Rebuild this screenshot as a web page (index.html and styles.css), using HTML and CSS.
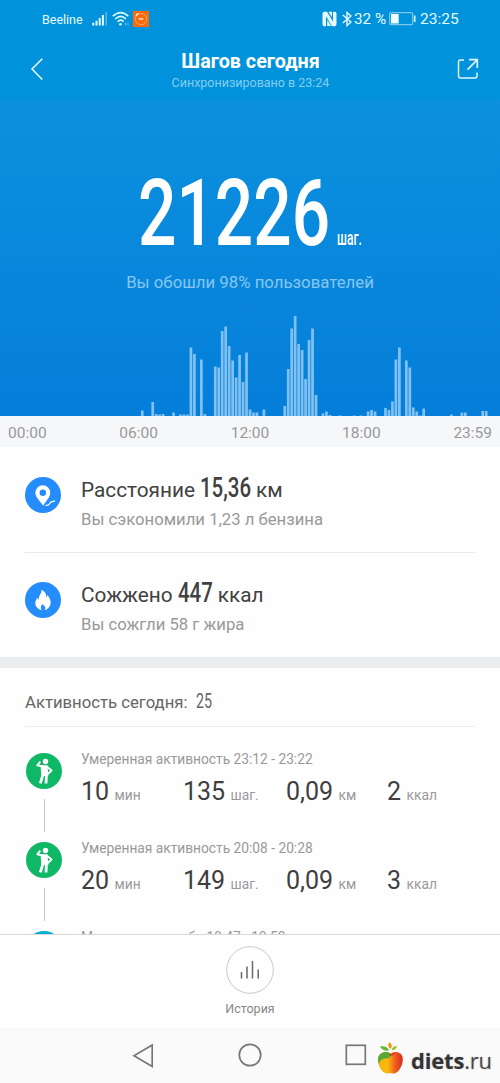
FILE: index.html
```html
<!DOCTYPE html>
<html lang="ru">
<head>
<meta charset="utf-8">
<title>Шагов сегодня</title>
<link rel="stylesheet" href="styles.css">
</head>
<body>
<div class="screen">
  <header class="top">
    <div class="status">
      <span class="carrier">Beeline</span>
      <svg class="signal" width="16" height="16" viewBox="0 0 16 16"><path d="M1.300 14.500v-2.800M4.500 14.500V9.700M7.700 14.500V7M10.900 14.500V4" stroke="#e4fbff" stroke-width="2"/><path d="M14.200 14.500V1" stroke="#5fb9e8" stroke-width="1.500"/></svg>
      <svg class="wifi" width="18" height="16" viewBox="0 0 18 16" fill="none" stroke="#dff8ff" stroke-width="1.700"><path d="M.8 5.200Q9-2 16.200 5.200M3.200 8Q9 2.600 13.800 8M5.600 10.600Q9 7.600 11.600 10.600"/><circle cx="8.500" cy="13.200" r="1.300" fill="#dff8ff" stroke="none"/><path d="M13.500 11.500v3M16 11.500v3" stroke="#6bc3ec" stroke-width="1"/></svg>
      <svg class="app" width="16" height="16" viewBox="0 0 16 16"><path d="M0 0h16v16H0z" fill="#fa6a0c"/><circle cx="8" cy="8" r="5.700" fill="none" stroke="#ffb07c" stroke-width=".8"/><path d="M3 4.800Q4 3.300 5.300 2.700" stroke="#fff" stroke-width="1.400" fill="none"/><path d="M5.700 8h4.600" stroke="#ffd9bd" stroke-width="1.700"/></svg>
      <span class="spacer"></span>
      <svg class="nfc" width="15" height="16" viewBox="0 0 15 16"><path d="M2.300.7Q.5.700.5 2.600V13.200Q.5 15.200 2.300 15.200H4V5.200l6 10h2.700q1.800 0 1.800-2V2.600q0-1.900-1.800-1.900H11V10.500L5 .7z" fill="#e8faff"/><path d="M5.200 15V8.800L9 15zM10 .8v5.500L6.500.8z" fill="#e8faff"/></svg>
      <svg class="bt" width="10" height="16" viewBox="0 0 10 16" fill="none" stroke="#e8faff" stroke-width="1.400"><path d="M.8 4 9 11 5 14.500v-13L9 5 .8 12"/></svg>
      <span class="pct">32 %</span>
      <svg class="battery" width="27" height="14" viewBox="0 0 27 14"><rect x=".7" y=".7" width="23" height="12" rx="1.500" fill="none" stroke="#7fc8ef" stroke-width="1.200"/><path d="M2 2h7.700v9.500H2z" fill="#f2fdff"/><path d="M25.700 3.500v6.500" stroke="#d9f5ff" stroke-width="1.600"/></svg>
      <span class="clock">23:25</span>
    </div>
    <div class="nav">
      <svg width="14" height="24" viewBox="0 0 14 24" fill="none" stroke="#f0fcff" stroke-width="1.500"><path d="M12.300 1.800 2 12l10.300 10.500"/></svg>
      <div class="heading"><h1>Шагов сегодня</h1><p>Синхронизировано в 23:24</p></div>
      <svg width="22" height="22" viewBox="0 0 22 22" fill="none" stroke="#e0f7ff" stroke-width="1.500"><path d="M7 2H3.700Q1.500 2 1.500 4.200V17.700Q1.500 20 3.700 20H17.700Q20 20 20 17.700V14.500"/><path d="M12 1.700h8.300V10M20 2 10.500 11.700" stroke-width="1.700"/></svg>
    </div>
  </header>

  <section class="hero">
    <div class="count"><span class="big"><span class="narrow">21226</span></span><span class="unit"><span class="narrow">шаг.</span></span></div>
    <p class="rank">Вы обошли 98% пользователей</p>
    <svg class="chart" width="500" height="110" viewBox="0 0 500 110"><path id="bars" fill="none" stroke="#80c1f1" stroke-width="2.700"/></svg>
  </section>
  <div class="axis"><span>00:00</span><span>06:00</span><span>12:00</span><span>18:00</span><span>23:59</span></div>

  <section class="stats">
    <div class="stat">
      <svg width="36" height="36" viewBox="0 0 36 36"><circle cx="18" cy="18" r="18" fill="#258cfb"/><path fill="#fff" fill-rule="evenodd" d="M18.200 28.700C16 25 10.300 20.400 10.300 15.800a7.500 7.500 0 0 1 15 0C25.300 20.400 20 25 18.200 28.700zM17.800 12.500a3.200 3.200 0 1 0 0 6.400 3.200 3.200 0 0 0 0-6.400z"/><path d="M20.500 28.300c5 .8 3.500-3.300 6.500-3.600 1.700-.2 2.200-.6 3-1" fill="none" stroke="#fff" stroke-width="1.200"/></svg>
      <div><h2>Расстояние <span class="val dist"><span class="narrow">15,36</span></span> км</h2><p>Вы сэкономили 1,23 л бензина</p></div>
    </div>
    <div class="stat">
      <svg width="36" height="36" viewBox="0 0 36 36"><circle cx="18" cy="18" r="18" fill="#258cfb"/><path fill="#fff" d="M16.500 7.800C20.300 9.600 21.500 12.500 21.200 15.200c.8-.5 1.100-1.400 1.200-2.200 2.600 3 3.900 6.300 3 9.500-.8 3.100-3 4.900-5.700 5.700 1-1.700.8-3.300-.2-4.300-1-.9-1.500-1.300-1.700-2-2 1.700-2.700 3.700-1.200 6.300-3.600-.8-6-3.200-6.300-6.400-.2-2.500.9-4.500 2-6 .2 1 .6 1.600 1.200 2C13.700 13.500 16.700 11.500 16.500 7.800z"/></svg>
      <div><h2>Сожжено <span class="val kcal"><span class="narrow">447</span></span> ккал</h2><p>Вы сожгли 58 г жира</p></div>
    </div>
  </section>

  <section class="activity">
    <h3>Активность сегодня: <span class="val total"><span class="narrow">25</span></span></h3>
    <div class="item">
      <div class="rail"><svg width="36" height="36" viewBox="0 0 36 36"><circle cx="18" cy="18" r="18" fill="#0fb865"/><circle cx="19.500" cy="8.500" r="2.700" fill="#fff"/><path d="M14.500 12.300h7l.8 10.700h-7z" fill="#fff"/><path d="M17 13.500 11.300 12.300 13.800 9.200M21 13.700 25.500 17.600 21.500 21.300" stroke="#fff" stroke-width="2" stroke-linejoin="round" stroke-linecap="round" fill="none"/><path d="M17 21.500 14.300 30.300M20.500 21.500 20 30.500" stroke="#fff" stroke-width="2.800"/></svg><i></i></div>
      <div class="info"><p>Умеренная активность 23:12 - 23:22</p><div class="nums"><span><b>10</b> мин</span><span><b>135</b> шаг.</span><span><b>0,09</b> км</span><span><b>2</b> ккал</span></div></div>
    </div>
    <div class="item">
      <div class="rail"><svg width="36" height="36" viewBox="0 0 36 36"><circle cx="18" cy="18" r="18" fill="#0fb865"/><circle cx="19.500" cy="8.500" r="2.700" fill="#fff"/><path d="M14.500 12.300h7l.8 10.700h-7z" fill="#fff"/><path d="M17 13.500 11.300 12.300 13.800 9.200M21 13.700 25.500 17.600 21.500 21.300" stroke="#fff" stroke-width="2" stroke-linejoin="round" stroke-linecap="round" fill="none"/><path d="M17 21.500 14.300 30.300M20.500 21.500 20 30.500" stroke="#fff" stroke-width="2.800"/></svg><i></i></div>
      <div class="info"><p>Умеренная активность 20:08 - 20:28</p><div class="nums"><span><b>20</b> мин</span><span><b>149</b> шаг.</span><span><b>0,09</b> км</span><span><b>3</b> ккал</span></div></div>
    </div>
    <div class="item">
      <div class="rail"><svg width="36" height="36" viewBox="0 0 36 36"><circle cx="18" cy="18" r="18" fill="#08aed0"/></svg></div>
      <div class="info"><p>Медленная ходьба 19:47 - 19:52</p></div>
    </div>
  </section>

  <footer class="history">
    <svg width="48" height="48" viewBox="0 0 48 48"><circle cx="24" cy="24" r="23.300" fill="#fff" stroke="#c9c9c9" stroke-width="1"/><path d="M15.500 32.500V26M21 32.500V20.500M26.500 32.500V15M32.200 32.500V23.500" stroke="#686868" stroke-width="1.500"/></svg>
    <span>История</span>
  </footer>
  <div class="system">
    <svg width="500" height="55" viewBox="0 0 500 55" fill="none" stroke="#777" stroke-width="1.700"><path d="M152.200 17v21.500L134 27.800z"/><circle cx="250" cy="27" r="10.700"/><rect x="346.300" y="17.300" width="19" height="19"/></svg>
    <div class="brand">
      <svg width="28" height="34" viewBox="0 0 28 34">
        <defs><linearGradient id="apple" x1="0" x2="1"><stop offset="0" stop-color="#f7b514"/><stop offset=".4" stop-color="#f9b90c"/><stop offset=".7" stop-color="#ef5b20"/><stop offset="1" stop-color="#d92b1c"/></linearGradient></defs>
        <path d="M13.500 11.500C17 9 24 9 25.600 15c1.300 7-3.800 16-8.600 16.500-1.500.2-2-.5-3.300-.5s-2 .8-4 .4C4 30.500.3 22 1 16.500 1.800 10 9 8.500 13.500 11.500z" fill="url(#apple)"/>
        <path d="M1 17C2 10 9 8.500 13 11.500c2 3-1 5-4 5S3 18 2 22C1.300 20 .8 19 1 17z" fill="#58a936"/>
        <path d="M13.300 11.500C12 13.700 15 13.700 17.200 11" fill="none" stroke="#be3d1e" stroke-width="1.300"/>
        <path d="M12 8.500C8 9.500 4.500 7.500 3 4.500 7 3.800 11 5 12 8.500z" fill="#66b62f"/><path d="M13.500 7C10.500 4.500 11 2 12.500.2c2.500 2 3 4.500 1 6.800z" fill="#f78b18"/><path d="M14.500 8.300C15 5.500 17 4 20 4c-.5 2.700-2.500 4.500-5.500 4.300z" fill="#9ac81e"/>
      </svg>
      <span><b>diets</b>.ru</span>
    </div>
  </div>
</div>
<script src="chart.js"></script>
</body>
</html>
```

FILE: styles.css
```css
* { box-sizing: border-box; }
body { margin: 0; font-family: Roboto, "Liberation Sans", sans-serif; background: #fefefe; }
h1, h2, h3, p { margin: 0; font-weight: 400; white-space: nowrap; }
svg { display: block; flex: none; }
.screen { width: 500px; height: 1083px; display: flex; flex-direction: column; overflow: hidden; }
.narrow { display: inline-block; transform-origin: 0 50%; white-space: nowrap; }

.top { height: 100px; flex: none; background: #0092da; color: #e6faff; }
.status { display: flex; align-items: center; height: 38px; padding: 0 41px 0 42px; font-size: 12.500px; }
.carrier { width: 50px; padding-top: 1px; }
.wifi { margin-left: 4px; }
.app { margin-left: 3px; }
.spacer { flex: 1; }
.nfc { margin-right: -2px; position: relative; left: -2px; }
.bt { margin-left: 5px; }
.pct { font-size: 15.300px; margin-left: 2px; width: 35px; white-space: nowrap; }
.battery { width: 27px; }
.clock { font-size: 15.500px; margin-left: 4px; width: 39px; }
.nav { display: flex; align-items: center; justify-content: space-between; height: 62px; padding: 0 21px 0 30px; }
.heading { text-align: center; padding-top: 3px; }
.heading h1 { font-size: 19.700px; font-weight: 700; line-height: 24px; color: #fff; }
.heading p { font-size: 12.500px; line-height: 18px; color: #83cdef; }

.hero { height: 316px; flex: none; background: linear-gradient(#0c91df, #057ed9); color: #fff; display: flex; flex-direction: column; }
.count { display: flex; align-items: baseline; height: 167px; padding: 60px 0 0 138px; }
.big { width: 199px; font-size: 93px; line-height: 108px; font-weight: 500; }
.big .narrow { transform: scaleX(.727); }
.unit { font-size: 19.500px; font-weight: 500; }
.unit .narrow { transform: scaleX(.62); }
.rank { font-size: 16.800px; line-height: 30px; text-align: center; color: #86c7f1; }
.chart { margin-top: auto; }
.axis { height: 31px; flex: none; display: flex; justify-content: space-between; padding: 0 8px; background: #f5f7f9; color: #999; font-size: 15.500px; line-height: 34px; }

.stats { height: 210px; flex: none; padding: 0 25px; }
.stat { display: flex; gap: 20px; height: 105px; padding-top: 30px; }
.stat + .stat { padding-top: 29px; border-top: 1px solid #e9e9e9; }
.stat h2 { display: flex; align-items: baseline; gap: 5.500px; margin-top: -2px; font-size: 20.800px; line-height: 26px; color: #414141; }
.stat p { margin-top: 4px; font-size: 16.700px; line-height: 26px; color: #999; }
.val { font-weight: 500; display: inline-block; }
.dist, .kcal { font-size: 28px; }
.dist { width: 50px; }
.kcal { width: 34px; }
.val .narrow { transform: scaleX(.73); }

.activity { height: 277px; flex: none; padding: 0 25px; border-top: 11px solid #ebedef; overflow: hidden; }
.activity h3 { height: 59px; display: flex; align-items: baseline; gap: 9px; padding-top: 21px; font-size: 16.700px; line-height: 26px; color: #666; border-bottom: 1px solid #ececec; }
.total { font-size: 19.500px; font-weight: 400; }
.item { display: flex; height: 89px; padding: 26px 0 0 1px; }
.rail { width: 36px; margin-right: 19px; }
.rail i { display: block; width: 1px; height: 33px; margin: 10px 0 0 18px; background: #c9c9c9; }
.info { margin-top: -1px; }
.info p { font-size: 13.750px; line-height: 14px; color: #999; }
.nums { display: grid; grid-template-columns: 102px 103px 101px 80px; margin-top: 10px; font-size: 13.800px; line-height: 32px; color: #999; white-space: nowrap; }
.nums b { font-size: 25px; font-weight: 400; color: #3f3f3f; margin-right: 2px; }

.history { height: 94px; flex: none; border-top: 1px solid #d8d8d8; display: flex; flex-direction: column; align-items: center; padding-top: 11px; font-size: 12.500px; line-height: 15px; color: #888; background: #fefefe; }
.history span { margin-top: 7px; }
.system { height: 55px; flex: none; background: #fafafa; position: relative; }
.brand { position: absolute; left: 377px; top: 14px; display: flex; font: 22px "Open Sans", sans-serif; color: #484848; }
.brand span { margin: 3px 0 0 6px; line-height: 30px; text-shadow: 0 0 2px #bbb, 1px 1px 0 #fff; letter-spacing: -.2px; }
.brand b { color: #333; }
```

FILE: chart.js
```js
// Steps per ten-minute slot: [slot, bar height]
const bars = [
  [0,5.5],[3,14],[4,2],[5,1.5],[6,2],[9,3.5],[11,1.5],[12,1.5],[13,1.5],
  [14,68.5],[15,62],[17,56.5],[18,2],[21,49.5],[22,48.5],[23,85],[24,89.5],
  [25,70],[26,55.5],[27,38.5],[28,61],[29,34],[30,63.5],[31,6.5],[32,3.5],[33,3.5],
  [35,6.5],[41,10],[42,47],[43,87.5],[44,100],[45,72],[46,66],[47,37],[48,76],
  [49,87.5],[50,21],[52,2.5],[53,4.5],[54,1],[57,0.6],[61,0.6],[63,0.6],
  [65,4.5],[66,6],[67,4.5],[70,8],[71,6],[72,14.5],[73,56.5],[74,68.5],
  [76,55.5],[77,48.5],[78,8.5],[79,4.5],[80,0.6],[81,7.5],[89,1.5],
  [92,3.5],[93,3.5],[98,5],[99,5]
];
document.getElementById("bars").setAttribute("d",
  bars.map(([slot, h]) => `M${142.3 + slot * 3.474} 110v${-h}`).join(""));
```
